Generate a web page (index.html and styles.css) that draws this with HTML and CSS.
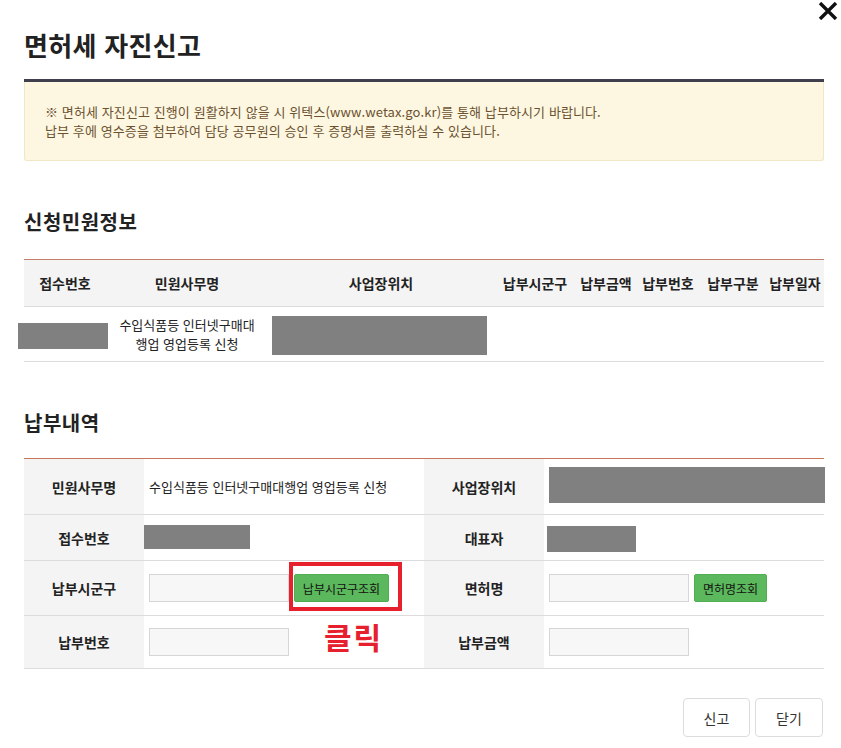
FILE: index.html
```html
<!doctype html>
<html lang="ko">
<head>
	<meta charset="UTF-8">
	<meta name="viewport" content="width=device-width, initial-scale=1">
	<title>면허세 자진신고</title>
	<link rel="stylesheet" href="styles.css">
</head>
<body>

<div class="pop">
	<button class="pop__close" type="button" aria-label="닫기">
		<svg viewBox="0 0 20 18" width="20" height="18"><path d="M2 1 L18 17 M18 1 L2 17" stroke="#111" stroke-width="3.4" fill="none"/></svg>
	</button>

	<h1 class="pop__title">면허세 자진신고</h1>

	<div class="notice">
		<p>※ 면허세 자진신고 진행이 원활하지 않을 시 위텍스(www.wetax.go.kr)를 통해 납부하시기 바랍니다.</p>
		<p>납부 후에 영수증을 첨부하여 담당 공무원의 승인 후 증명서를 출력하실 수 있습니다.</p>
	</div>

	<h2 class="sec-title">신청민원정보</h2>
	<table class="list">
		<colgroup>
			<col style="width:82px"><col style="width:162px"><col style="width:226px"><col style="width:82px">
			<col style="width:60px"><col style="width:64px"><col style="width:66px"><col style="width:58px">
		</colgroup>
		<thead>
			<tr>
				<th>접수번호</th>
				<th>민원사무명</th>
				<th>사업장위치</th>
				<th>납부시군구</th>
				<th>납부금액</th>
				<th>납부번호</th>
				<th>납부구분</th>
				<th>납부일자</th>
			</tr>
		</thead>
		<tbody>
			<tr>
				<td class="list__left"><span class="mask mask--no"></span></td>
				<td class="list__name">수입식품등 인터넷구매대<br>행업 영업등록 신청</td>
				<td class="list__left"><span class="mask mask--addr"></span></td>
				<td></td>
				<td></td>
				<td></td>
				<td></td>
				<td></td>
			</tr>
		</tbody>
	</table>

	<h2 class="sec-title">납부내역</h2>
	<table class="form">
		<colgroup>
			<col style="width:120px"><col style="width:280px"><col style="width:120px"><col style="width:280px">
		</colgroup>
		<tbody>
			<tr class="form__row form__row--first">
				<th>민원사무명</th>
				<td class="form__text">수입식품등 인터넷구매대행업 영업등록 신청</td>
				<th>사업장위치</th>
				<td><span class="mask mask--place"></span></td>
			</tr>
			<tr class="form__row">
				<th>접수번호</th>
				<td class="form__flush"><span class="mask mask--rcpt"></span></td>
				<th>대표자</th>
				<td><span class="mask mask--ceo"></span></td>
			</tr>
			<tr class="form__row form__row--tall">
				<th>납부시군구</th>
				<td>
					<div class="field">
						<input class="field__input" type="text">
						<span class="mark"><button class="btn-green btn-green--wide" type="button">납부시군구조회</button></span>
					</div>
				</td>
				<th>면허명</th>
				<td>
					<div class="field">
						<input class="field__input" type="text">
						<button class="btn-green btn-green--gap" type="button">면허명조회</button>
					</div>
				</td>
			</tr>
			<tr class="form__row form__row--mid">
				<th>납부번호</th>
				<td>
					<div class="field">
						<input class="field__input" type="text">
						<strong class="mark__label">클릭</strong>
					</div>
				</td>
				<th>납부금액</th>
				<td>
					<div class="field">
						<input class="field__input" type="text">
					</div>
				</td>
			</tr>
		</tbody>
	</table>

	<div class="pop__foot">
		<button class="btn" type="button">신고</button>
		<button class="btn" type="button">닫기</button>
	</div>
</div>

</body>
</html>
```

FILE: styles.css
```css
* {
	margin: 0;
	padding: 0;
	box-sizing: border-box;
}
body {
	color: #222;
	font-family: 'Noto Sans CJK KR', 'Noto Sans', sans-serif;
	font-size: 13px;
	background: #fff;
}
.pop {
	position: relative;
	width: 841px;
	padding: 28px 17px 0 24px;
}
.pop__close {
	position: absolute;
	top: 2px;
	right: 3px;
	border: 0;
	background: none;
	width: 20px;
	height: 18px;
	cursor: pointer;
}
.pop__close svg {
	display: block;
}
.pop__title {
	font-size: 26px;
	line-height: 34px;
	font-weight: 700;
	color: #222;
	letter-spacing: 0.3px;
	padding-bottom: 17px;
	border-bottom: 3px solid #3f3f4d;
}
.notice {
	background-color: #fdf7e2;
	border: 1px solid #f1e6c6;
	border-top: 0;
	border-radius: 0 0 3px 3px;
	padding: 20px 20px 20px;
	color: #6b512f;
	font-size: 13px;
	line-height: 19px;
	letter-spacing: 0.1px;
}
.sec-title {
	margin-top: 47px;
	font-size: 20px;
	line-height: 28px;
	font-weight: 700;
	color: #222;
	letter-spacing: 0.5px;
	margin-bottom: 23px;
}
.sec-title + .form {
	margin-top: -2px;
}
table {
	width: 800px;
	table-layout: fixed;
	border-collapse: collapse;
}
.list {
	border-top: 1px solid #c4806a;
}
.list th {
	height: 47px;
	background-color: #f4f4f4;
	font-size: 14px;
	font-weight: 700;
	white-space: nowrap;
	text-align: center;
	border-bottom: 1px solid #dcdcdc;
}
.list td {
	height: 55px;
	text-align: center;
	line-height: 19px;
	border-bottom: 1px solid #dcdcdc;
	white-space: nowrap;
}
.list__name {
	font-size: 13px;
}
.list__left {
	text-align: left !important;
}
.mask {
	display: block;
	background-color: #808080;
}
.mask--no {
	width: 90px;
	height: 26px;
	margin-left: -6px;
	margin-top: 3px;
}
.mask--addr {
	width: 215px;
	height: 39px;
	margin-left: 4px;
	margin-top: 2px;
}
.mask--place {
	width: 276px;
	height: 36px;
	margin-top: -4px;
}
.mask--rcpt {
	width: 106px;
	height: 24px;
	margin-top: -2px;
}
.mask--ceo {
	width: 89px;
	height: 26px;
	margin-left: -2px;
	margin-top: 3px;
}
.form {
	border-top: 1px solid #c8765a;
}
.form th {
	background-color: #f4f4f4;
	font-size: 14px;
	font-weight: 700;
	text-align: center;
	border-bottom: 1px solid #dcdcdc;
}
.form td {
	padding-left: 5px;
	border-bottom: 1px solid #dcdcdc;
	white-space: nowrap;
}
.form__row {
	height: 46px;
}
.form__row--first {
	height: 56px;
}
.form__row--tall {
	height: 55px;
}
.form__row--mid {
	height: 53px;
}
.form__text {
	font-size: 13px;
	color: #222;
}
.form td.form__flush {
	padding-left: 0;
}
.field {
	display: flex;
	align-items: center;
}
.field__input {
	width: 140px;
	height: 28px;
	border: 1px solid #d6d6d6;
	background-color: #f7f7f7;
}
.btn-green {
	height: 28px;
	background-color: #5cb85c;
	border: 1px solid #4fae4f;
	border-radius: 2px;
	color: #111;
	font-family: 'Noto Sans CJK KR', sans-serif;
	font-size: 12px;
	padding: 0 6px;
}
.btn-green--wide {
	width: 95px;
}
.btn-green--gap {
	width: 73px;
	margin-left: 5px;
}
.mark {
	display: inline-flex;
	border: 4px solid #e6202c;
	padding: 8px 9px 5px 1px;
	margin-top: -3px;
}
.mark__label {
	margin-left: 35px;
	margin-top: -12px;
	font-size: 30px;
	line-height: 34px;
	font-weight: 700;
	color: #e6202c;
	letter-spacing: 2px;
}
.pop__foot {
	display: flex;
	justify-content: flex-end;
	gap: 5px;
	margin-top: 29px;
	padding-right: 1px;
}
.btn {
	width: 67px;
	height: 39px;
	background-color: #fff;
	border: 1px solid #dcdcdc;
	border-radius: 4px;
	font-family: 'Noto Sans CJK KR', sans-serif;
	font-size: 14px;
	color: #333;
}
.btn + .btn {
	width: 68px;
}
```
